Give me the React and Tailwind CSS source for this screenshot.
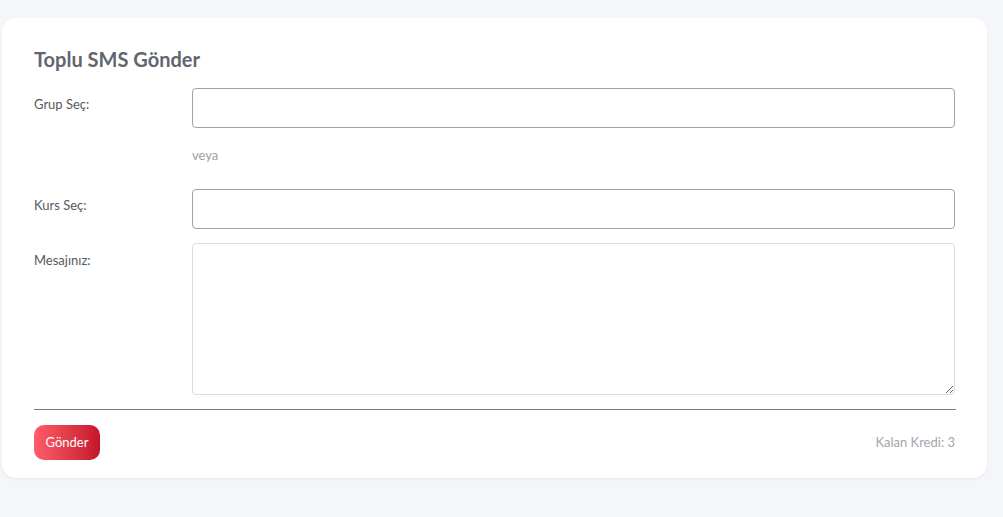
export default function App() {
  const font = { fontFamily: '"Lato", "Noto Sans", sans-serif' };
  return (
    <div className="min-h-[517px] w-full bg-[#f5f6fa] pt-[18px] pb-[39px]" style={font}>
      <div className="ml-[2px] w-[985px] rounded-[14px] bg-white px-[32px] pt-[29px] pb-[18px] shadow-[0_1px_3px_rgba(0,0,0,0.06)]">
        <h1 className="text-[20px] leading-6 font-bold text-[#5f6670]">Toplu SMS Gönder</h1>

        <div className="mt-[17px] flex">
          <label className="w-[158px] shrink-0 pt-2 text-[13px] leading-4 text-[#555a60]">Grup Seç:</label>
          <div className="flex-1">
            <div className="h-[40px] rounded-[4px] border border-[#a3a3a3] bg-white" />
            <div className="mt-[17px] text-[13px] leading-5 text-[#9aa0a6]">veya</div>
          </div>
        </div>

        <div className="mt-[24px] flex">
          <label className="w-[158px] shrink-0 pt-2 text-[13px] leading-4 text-[#555a60]">Kurs Seç:</label>
          <div className="h-[40px] flex-1 rounded-[4px] border border-[#a3a3a3] bg-white" />
        </div>

        <div className="mt-[14px] flex">
          <label className="w-[158px] shrink-0 pt-[9px] text-[13px] leading-4 text-[#555a60]">Mesajınız:</label>
          <textarea className="h-[152px] flex-1 resize-y rounded-[4px] border border-[#dcdcdc] bg-white outline-none" />
        </div>

        <div className="mt-[14px] h-px w-[922px] bg-[#7a7a7a]" />

        <div className="mt-[15px] flex items-center justify-between">
          <button className="h-[35px] w-[66px] rounded-[10px] bg-gradient-to-r from-[#ff5b68] to-[#c4132c] text-[13px] text-white">
            Gönder
          </button>
          <span className="text-[13px] text-[#a3a7ab]">Kalan Kredi: 3</span>
        </div>
      </div>
    </div>
  );
}
